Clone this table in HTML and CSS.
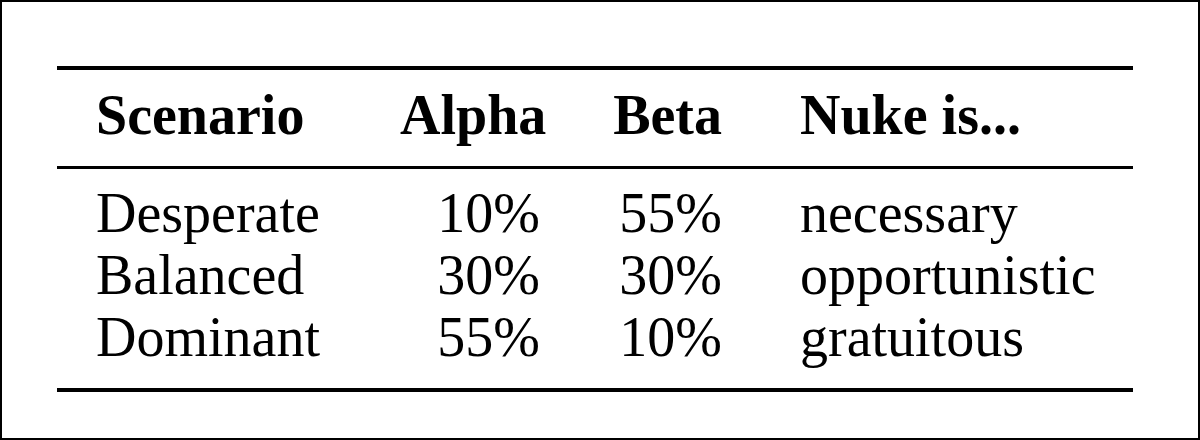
FILE: index.html
```html
<!DOCTYPE html>
<html>
<head>
<meta charset="utf-8">
<link rel="stylesheet" href="styles.css">
</head>
<body>
<div class="frame">
  <table class="results">
    <colgroup>
      <col class="c-scn">
      <col class="c-alpha">
      <col class="c-beta">
      <col class="c-nuke">
    </colgroup>
    <thead>
      <tr>
        <th class="scn">Scenario</th>
        <th class="num">Alpha</th>
        <th class="num">Beta</th>
        <th class="nuke">Nuke is...</th>
      </tr>
    </thead>
    <tbody>
      <tr class="first">
        <td class="scn">Desperate</td>
        <td class="num">10%</td>
        <td class="num">55%</td>
        <td class="nuke">necessary</td>
      </tr>
      <tr>
        <td class="scn">Balanced</td>
        <td class="num">30%</td>
        <td class="num">30%</td>
        <td class="nuke">opportunistic</td>
      </tr>
      <tr class="last">
        <td class="scn">Dominant</td>
        <td class="num">55%</td>
        <td class="num">10%</td>
        <td class="nuke">gratuitous</td>
      </tr>
    </tbody>
  </table>
</div>
</body>
</html>
```
FILE: styles.css
```css
html, body {
  margin: 0;
  padding: 0;
  background: #fff;
}

.frame {
  width: 1200px;
  height: 440px;
  box-sizing: border-box;
  border: 2px solid #000;
  padding: 64px 0 0 55px;
  font-family: "Liberation Serif", "Times New Roman", serif;
  color: #000;
}

.results {
  width: 1076px;
  table-layout: fixed;
  border-collapse: separate;
  border-spacing: 0;
  font-size: 56px;
  line-height: 62px;
}

.c-scn { width: 343px; }
.c-alpha { width: 140px; }
.c-beta { width: 182px; }
.c-nuke { width: 411px; }

.results th,
.results td {
  padding: 0;
  white-space: nowrap;
  font-weight: normal;
}

.results th {
  font-weight: bold;
  border-top: 4px solid #000;
  border-bottom: 3px solid #000;
  padding-top: 14px;
  padding-bottom: 20px;
}

.results .scn {
  text-align: left;
  padding-left: 39px;
}

.results .num {
  text-align: right;
}

.results .nuke {
  text-align: left;
  padding-left: 78px;
}

.results tr.first td {
  padding-top: 13px;
}

.results tr.last td {
  padding-bottom: 20px;
  border-bottom: 4px solid #000;
}
```
